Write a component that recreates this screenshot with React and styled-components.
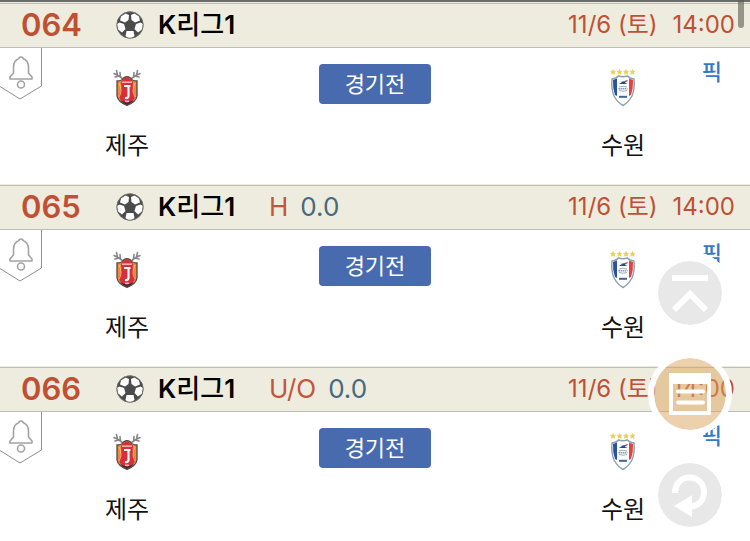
import React from "react";
import styled, { createGlobalStyle } from "styled-components";

const GlobalStyle = createGlobalStyle`
  * { box-sizing: border-box; }
  body {
    margin: 0;
    background: #fff;
    color: #111;
    font-family: Inter, "Noto Sans CJK KR", sans-serif;
    overflow: hidden;
  }
  button { font: inherit; border: 0; padding: 0; background: none; cursor: pointer; }
`;

const Page = styled.main`
  border-top: 2px solid #6b6b69;
`;

const Match = styled.article`
  position: relative;
`;

const MatchHeader = styled.header`
  display: grid;
  grid-template-columns: 95px 42px 111px 1fr auto;
  align-items: center;
  height: 46px;
  padding: 1px 15px 0 21px;
  background: #eeecdf;
  border-bottom: 1px solid #bebcb6;
  box-shadow: inset 0 1px #eeecdf, inset 0 2px #bfbdb4;
`;

const Number = styled.strong`
  color: #bf5033;
  font-size: 31px;
  line-height: 44px;
  font-weight: 600;
`;

const League = styled.h2`
  margin: 0;
  color: #000;
  font-size: 26px;
  line-height: 44px;
  font-weight: 600;
  white-space: nowrap;
`;

const Hangul = styled.span`
  font-family: "Noto Sans CJK KR", sans-serif;
  font-size: ${(p) => p.$size}px;
  font-weight: ${(p) => p.$weight || 400};
  line-height: 1;
`;

const Odds = styled.div`
  display: flex;
  gap: 12px;
  color: #456a80;
  font-size: 26px;
  line-height: 44px;
  font-weight: 400;
`;

const OddsType = styled.span`
  color: #c4553a;
`;

const Kickoff = styled.time`
  display: flex;
  gap: 15px;
  color: #bf5033;
  font-size: 24px;
  line-height: 44px;
  white-space: nowrap;
`;

const MatchBody = styled.div`
  display: grid;
  grid-template-columns: repeat(3, 1fr);
  justify-items: center;
  align-items: start;
  padding: 16px 3px 22px;
`;

const Team = styled.div`
  display: flex;
  flex-direction: column;
  align-items: center;
  gap: 19px;
  padding-top: 5px;
  font-family: "Noto Sans CJK KR", sans-serif;
  font-size: 24px;
  line-height: 36px;
`;

const StatusButton = styled.button`
  && {
    width: 112px;
    height: 40px;
    padding-bottom: 4px;
    border-radius: 4px;
    background: #486aaf;
    color: #fff;
    font-family: "Noto Sans CJK KR", sans-serif;
    font-size: 22px;
    font-weight: 400;
    line-height: 36px;
  }
`;

const AlarmButton = styled.button`
  position: absolute;
  top: 46px;
  left: 0;
  svg { display: block; }
`;

const PickLink = styled.a`
  position: absolute;
  top: 54px;
  right: 28px;
  color: #3579c4;
  font-family: "Noto Sans CJK KR", sans-serif;
  font-size: 22px;
  line-height: 28px;
  font-weight: 500;
  text-decoration: none;
`;

const FloatingTools = styled.nav`
  position: fixed;
  right: 18px;
  bottom: 4px;
  display: flex;
  flex-direction: column;
  gap: 17px;
`;

const RoundButton = styled.button`
  && {
    width: 84px;
    height: 84px;
    border: ${(p) => (p.$active ? 6 : 10)}px solid #fff;
    border-radius: 50%;
    background: ${(p) => (p.$active ? "rgba(219, 163, 93, 0.5)" : "#e8e8e8")};
    background-clip: padding-box;
    display: grid;
    place-items: center;
  }
`;

const ScrollThumb = styled.div`
  position: fixed;
  top: 0;
  right: 6px;
  width: 6px;
  height: 28px;
  border-radius: 0 0 3px 3px;
  background: rgba(90, 90, 82, 0.6);
`;

const SoccerBall = () => (
  <svg width="28" height="28" viewBox="0 0 28 28" aria-hidden="true">
    <defs>
      <clipPath id="ball"><circle cx="14" cy="14" r="13.2" /></clipPath>
    </defs>
    <circle cx="14" cy="14" r="13.4" fill="#4b4b4b" />
    <g clipPath="url(#ball)" fill="#fff">
      <path d="M5 5.5 9.5 2.5 13 4 12.5 9 9 11.500 4 9.500Z" />
      <path d="M23 5.500 18.500 2.500 15 4 15.500 9 19 11.500 24 9.500Z" />
      <path d="M1 13 3.500 11.500 8 13 9.500 18 6 21.500 2 18.500Z" />
      <path d="M27 13 24.500 11.500 20 13 18.500 18 22 21.500 26 18.500Z" />
      <path d="M10.500 20 17.500 20 18.500 25 15.500 27 12 27 9.500 25Z" />
    </g>
    <circle cx="14" cy="14" r="13.2" fill="none" stroke="#77756f" strokeWidth=".8" />
  </svg>
);

const JejuCrest = () => (
  <svg width="30" height="38" viewBox="0 0 30 38" role="img" aria-label="제주">
    <g fill="none" stroke="#85878a" strokeWidth="1.6" strokeLinecap="round">
      <path d="M11 10 7 7 2 4.500M7 7 3 8M5.500 6 4.500 1.500M8.500 8 8 3.500" />
      <path d="M19 10 23 7 28 4.500M23 7 27 8M24.500 6 25.500 1.500M21.500 8 22 3.500" />
    </g>
    <path d="M5 12Q10 12 12 8.500Q15 7 18 8.500Q20 12 25 12V27Q24 33 15 36.500Q6 33 5 27Z" fill="#ef8a38" stroke="#51484a" strokeWidth="1.3" />
    <path d="M9 13Q11 9 15 8.500Q19 9 21 13Q20 20 23 27Q22 33 15 34.500Q8 33 7 27Q10 20 9 13Z" fill="#d92f3c" />
    <path d="M7 14Q11 22 7 28M23 14Q19 22 23 28" fill="none" stroke="#f7c98a" strokeWidth=".8" />
    <path d="M10 13.200H20" stroke="#f5b7b6" strokeWidth="1.500" />
    <path d="M12 17H18.500M16.500 17V27Q16 29.500 13 29" fill="none" stroke="#fff" strokeWidth="2.200" />
    <path d="M8 31Q11 35 15 36Q19 35 22 31L15 34Z" fill="#382c31" />
    <path d="M13 32.200H17" stroke="#fff" strokeWidth="1" />
  </svg>
);

const SuwonCrest = () => (
  <svg width="26" height="38" viewBox="0 0 26 38" role="img" aria-label="수원">
    <g fill="#e9d04c">
      {[3, 9.500, 16, 22.500].map((x) => (
        <path key={x} transform={`translate(${x} 3)`} d="M0-2.500 .8-.8 2.500-.7 1.200.5 1.600 2.300 0 1.400-1.600 2.300-1.200.5-2.500-.7-.8-.8Z" stroke="#e9d04c" strokeWidth=".6" />
      ))}
    </g>
    <path d="M2 10Q7 9 8.500 7Q13 8.500 17.500 7Q19 9 24 10Q25 19 22 27Q18 34 13 36.500Q8 34 4 27Q1 19 2 10Z" fill="#fff" stroke="#8ba1ae" strokeWidth="1.400" />
    <path d="M3 11 7 9.500V27L5 26Q2.500 19 3 11Z" fill="#2851a2" />
    <path d="M23 11 19 9.500V27L21 26Q23.500 19 23 11Z" fill="#df4440" />
    <path d="M9 11Q12 14 17 11L15 14 18 15H9L12 13Z" fill="#234b91" />
    <path d="M15 12 18 11 17 13Z" fill="#dc4646" />
    <path d="M9 18Q13 16.500 17 18M9 21.500Q13 23 17 21.500" fill="none" stroke="#9aadc0" strokeWidth="1" />
    <path d="M8.500 19.800H17.500" stroke="#8095b1" strokeWidth="1.600" strokeDasharray="1.500 .6" />
    <path d="M9 27.800H17" stroke="#3d64a3" strokeWidth="2" />
  </svg>
);

const BellTab = () => (
  <svg width="42" height="53" viewBox="0 0 42 53" fill="none" aria-hidden="true">
    <path d="M41.500 0V38L20 51 0 38.500" stroke="#8f8f8f" strokeWidth="1" />
    <path d="M19 10.500Q19 9 21 9Q23 9 23 10.500C27 12 28.500 15 28.500 19V25L32 29V31H10V29L13.500 25V19C13.500 15 15 12 19 10.500Z" stroke="#a3a3a3" strokeWidth="1.600" strokeLinejoin="round" />
    <circle cx="21" cy="36.500" r="3.500" stroke="#a3a3a3" strokeWidth="1.600" />
  </svg>
);

const TopIcon = () => (
  <svg width="36" height="38" viewBox="0 0 36 38" fill="none" stroke="#fff" strokeWidth="6" aria-hidden="true">
    <path d="M0 4H36M2 36 18 20 34 36" />
  </svg>
);

const ListIcon = () => (
  <svg width="42" height="42" viewBox="0 0 42 42" fill="none" stroke="#fff" aria-hidden="true">
    <rect x="2" y="2" width="38" height="38" strokeWidth="4" />
    <path d="M0 5.500H42" strokeWidth="11" />
    <path d="M9 18.500H34M9 29.500H34" strokeWidth="4" strokeLinecap="round" />
  </svg>
);

const RefreshIcon = () => (
  <svg width="40" height="44" viewBox="0 0 40 44" aria-hidden="true">
    <path d="M5 20C5 11 11 4.500 19.500 4.500C28 4.500 34 11 34 19C34 27 29 32.500 21 33.500" fill="none" stroke="#fff" strokeWidth="6" />
    <path d="M4 33 22 22V44Z" fill="#fff" />
  </svg>
);

const matches = [
  { no: "064" },
  { no: "065", type: "H", value: "0.0" },
  { no: "066", type: "U/O", value: "0.0" },
];

function MatchCard({ no, type, value }) {
  return (
    <Match>
      <MatchHeader>
        <Number>{no}</Number>
        <SoccerBall />
        <League>K<Hangul $size={26} $weight={500}>리그</Hangul>1</League>
        <Odds>
          {type && <OddsType>{type}</OddsType>}
          {value && <span>{value}</span>}
        </Odds>
        <Kickoff>
          <span>11/6 (<Hangul $size={24}>토</Hangul>)</span>
          <span>14:00</span>
        </Kickoff>
      </MatchHeader>
      <MatchBody>
        <Team><JejuCrest />제주</Team>
        <StatusButton type="button">경기전</StatusButton>
        <Team><SuwonCrest />수원</Team>
      </MatchBody>
      <AlarmButton type="button" aria-label="알림"><BellTab /></AlarmButton>
      <PickLink href="#pick">픽</PickLink>
    </Match>
  );
}

export default function App() {
  return (
    <>
      <GlobalStyle />
      <Page>
        {matches.map((m) => <MatchCard key={m.no} {...m} />)}
      </Page>
      <FloatingTools>
        <RoundButton type="button" aria-label="맨 위로"><TopIcon /></RoundButton>
        <RoundButton type="button" $active aria-label="목록"><ListIcon /></RoundButton>
        <RoundButton type="button" aria-label="새로고침"><RefreshIcon /></RoundButton>
      </FloatingTools>
      <ScrollThumb />
    </>
  );
}
